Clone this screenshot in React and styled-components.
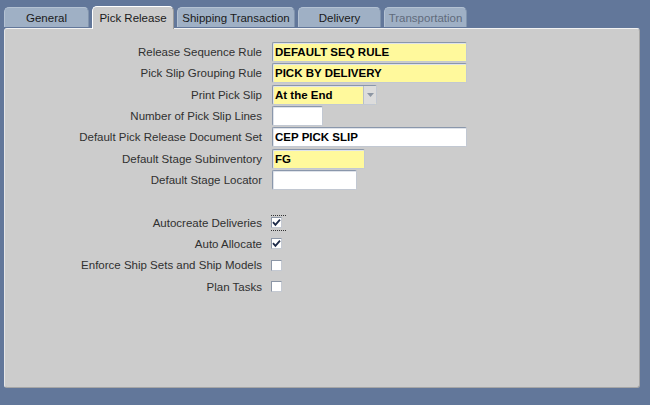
import React from "react";
import styled, { createGlobalStyle } from "styled-components";

const Global = createGlobalStyle`
  html, body { margin: 0; padding: 0; }
  body {
    background: #62779a;
    font-family: "Liberation Sans", Arial, sans-serif;
    width: 650px;
    height: 405px;
    overflow: hidden;
  }
`;

const Screen = styled.div`
  width: 650px;
  height: 405px;
  display: flex;
  flex-direction: column;
  padding: 6px 0 0 4px;
  box-sizing: border-box;
`;

const TabBar = styled.div`
  display: flex;
  align-items: flex-end;
  gap: 3px;
  height: 22px;
  position: relative;
  z-index: 2;
`;

const Tab = styled.div`
  box-sizing: border-box;
  width: ${(p) => p.$w}px;
  height: ${(p) => (p.$active ? 23 : 20)}px;
  margin-bottom: ${(p) => (p.$active ? -1 : 1)}px;
  display: flex;
  align-items: center;
  justify-content: center;
  font-size: 11.5px;
  padding-top: ${(p) => (p.$active ? 0 : 1)}px;
  color: ${(p) => (p.$disabled ? "#5f6b7c" : "#1a1a1a")};
  background: ${(p) => (p.$active ? "#cccccc" : "#9fb0c5")};
  border-top: 1px solid ${(p) => (p.$active ? "#ffffff" : "#b4c2d3")};
  border-left: 1px solid ${(p) => (p.$active ? "#ffffff" : "#b4c2d3")};
  border-right: 1px solid ${(p) => (p.$active ? "#9a9a9a" : "#8194ad")};
  border-radius: 5px 5px 0 0;
`;

const Panel = styled.div`
  box-sizing: border-box;
  width: 636px;
  height: 360px;
  background: #cccccc;
  border-top: 1px solid #f2f2f2;
  border-left: 1px solid #e6e6e6;
  border-right: 1px solid #a6a6a6;
  border-bottom: 1px solid #a6a6a6;
  border-radius: 3px;
  padding: 13px 0 0 0;
  position: relative;
  z-index: 1;
`;

const Form = styled.div`
  display: grid;
  grid-template-columns: 257px 1fr;
  column-gap: 10px;
  grid-auto-rows: 21.33px;
`;

const Label = styled.div`
  grid-column: 1;
  text-align: right;
  font-size: 11.5px;
  color: #303030;
  line-height: 20px;
  white-space: nowrap;
`;

const Cell = styled.div`
  grid-column: 2;
  display: flex;
  align-items: flex-start;
`;

const Spacer = styled.div`
  grid-column: 1 / span 2;
`;

const Field = styled.div`
  box-sizing: border-box;
  width: ${(p) => p.$w}px;
  height: 20px;
  background: ${(p) => (p.$req ? "#fff99c" : "#ffffff")};
  border: 1px solid #8a97ab;
  border-bottom-color: #c2c8d2;
  border-right-color: #c2c8d2;
  box-shadow: inset 1px 1px 0 #dfe3ea;
  border-radius: 2px;
  font-size: 11.5px;
  font-weight: bold;
  color: #000;
  line-height: 18px;
  padding-left: 2px;
  white-space: nowrap;
  overflow: hidden;
  display: flex;
`;

const FieldText = styled.span`
  flex: 1;
`;

const DropButton = styled.div`
  width: 12px;
  height: 18px;
  background: #dcdcdc;
  border-left: 1px solid #b8bec8;
  display: flex;
  align-items: center;
  justify-content: center;
`;

const CheckCell = styled.div`
  grid-column: 2;
  display: flex;
  align-items: center;
  height: 20px;
`;

const Focus = styled.div`
  width: 15px;
  height: 16px;
  box-sizing: border-box;
  display: flex;
  align-items: center;
  border-top: ${(p) => (p.$focus ? "1px dotted #333" : "1px solid transparent")};
  border-bottom: ${(p) => (p.$focus ? "1px dotted #333" : "1px solid transparent")};
  margin-left: -1px;
`;

const Box = styled.div`
  box-sizing: border-box;
  width: 11px;
  height: 11px;
  background: #ffffff;
  border: 1px solid #8c96a6;
  border-bottom-color: #c4c9d2;
  border-right-color: #c4c9d2;
  display: flex;
  align-items: center;
  justify-content: center;
`;

const Check = () => (
  <svg width="9" height="9" viewBox="0 0 9 9">
    <path d="M1 4.2 L3.4 6.8 L8 1.6" fill="none" stroke="#1d2a48" strokeWidth="1.8" />
  </svg>
);

const Arrow = () => (
  <svg width="7" height="4" viewBox="0 0 7 4">
    <path d="M0 0 H7 L3.5 4 Z" fill="#8d96a3" />
  </svg>
);

const tabs = [
  { label: "General", w: 85 },
  { label: "Pick Release", w: 82, active: true },
  { label: "Shipping Transaction", w: 118 },
  { label: "Delivery", w: 83 },
  { label: "Transportation", w: 83, disabled: true },
];

const fields = [
  { label: "Release Sequence Rule", value: "DEFAULT SEQ RULE", w: 195, req: true },
  { label: "Pick Slip Grouping Rule", value: "PICK BY DELIVERY", w: 195, req: true },
  { label: "Print Pick Slip", value: "At the End", w: 105, req: true, drop: true },
  { label: "Number of Pick Slip Lines", value: "", w: 51 },
  { label: "Default Pick Release Document Set", value: "CEP PICK SLIP", w: 195 },
  { label: "Default Stage Subinventory", value: "FG", w: 93, req: true },
  { label: "Default Stage Locator", value: "", w: 85 },
];

const checks = [
  { label: "Autocreate Deliveries", checked: true, focus: true },
  { label: "Auto Allocate", checked: true },
  { label: "Enforce Ship Sets and Ship Models", checked: false },
  { label: "Plan Tasks", checked: false },
];

export default function App() {
  return (
    <>
      <Global />
      <Screen>
        <TabBar>
          {tabs.map((t) => (
            <Tab key={t.label} $w={t.w} $active={t.active} $disabled={t.disabled}>
              {t.label}
            </Tab>
          ))}
        </TabBar>
        <Panel>
          <Form>
            {fields.map((f) => (
              <React.Fragment key={f.label}>
                <Label>{f.label}</Label>
                <Cell>
                  <Field $w={f.w} $req={f.req}>
                    <FieldText>{f.value}</FieldText>
                    {f.drop && (
                      <DropButton>
                        <Arrow />
                      </DropButton>
                    )}
                  </Field>
                </Cell>
              </React.Fragment>
            ))}
            <Spacer />
            {checks.map((c) => (
              <React.Fragment key={c.label}>
                <Label>{c.label}</Label>
                <CheckCell>
                  <Focus $focus={c.focus}>
                    <Box>{c.checked && <Check />}</Box>
                  </Focus>
                </CheckCell>
              </React.Fragment>
            ))}
          </Form>
        </Panel>
      </Screen>
    </>
  );
}
